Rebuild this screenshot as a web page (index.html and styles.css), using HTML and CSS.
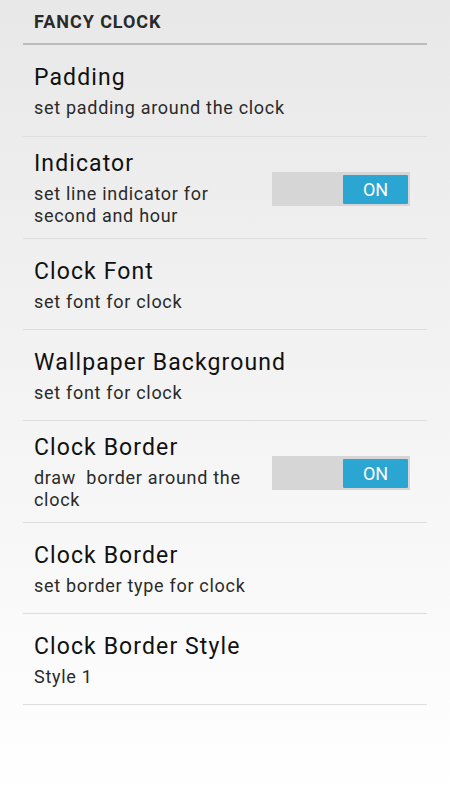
FILE: index.html
```html
<!DOCTYPE html>
<html lang="en">

<head>
    <meta charset="UTF-8">
    <meta name="viewport" content="width=device-width, initial-scale=1.0">
    <title>Fancy Clock</title>
    <link rel="stylesheet" href="styles.css">
</head>

<body>
    <div class="settings">
        <h2 class="category">FANCY CLOCK</h2>

        <div class="pref">
            <div class="pref-text">
                <div class="pref-title">Padding</div>
                <div class="pref-summary">set padding around the clock</div>
            </div>
        </div>

        <div class="pref">
            <div class="pref-text">
                <div class="pref-title">Indicator</div>
                <div class="pref-summary">set line indicator for second and hour</div>
            </div>
            <div class="toggle"><span class="toggle-on">ON</span></div>
        </div>

        <div class="pref">
            <div class="pref-text">
                <div class="pref-title">Clock Font</div>
                <div class="pref-summary">set font for clock</div>
            </div>
        </div>

        <div class="pref">
            <div class="pref-text">
                <div class="pref-title">Wallpaper Background</div>
                <div class="pref-summary">set font for clock</div>
            </div>
        </div>

        <div class="pref">
            <div class="pref-text">
                <div class="pref-title">Clock Border</div>
                <div class="pref-summary">draw&nbsp; border around the clock</div>
            </div>
            <div class="toggle"><span class="toggle-on">ON</span></div>
        </div>

        <div class="pref">
            <div class="pref-text">
                <div class="pref-title">Clock Border</div>
                <div class="pref-summary">set border type for clock</div>
            </div>
        </div>

        <div class="pref">
            <div class="pref-text">
                <div class="pref-title">Clock Border Style</div>
                <div class="pref-summary">Style 1</div>
            </div>
        </div>
    </div>
</body>

</html>
```

FILE: styles.css
```css
/* General */
* {
    box-sizing: border-box;
    margin: 0;
    padding: 0;
}

html, body {
    height: 100%;
}

body {
    font-family: Roboto, "Noto Sans", sans-serif;
    background: linear-gradient(#e8e8e8, #ffffff);
    color: #111;
}

.settings {
    margin: 0 23px;
}

/* Category header */
.category {
    font-size: 18px;
    font-weight: bold;
    letter-spacing: 0.95px;
    color: #2a2a2a;
    height: 45px;
    padding: 11px 0 0 11px;
    border-bottom: 2px solid #bcbcbc;
}

/* Preference rows */
.pref {
    display: flex;
    align-items: center;
    min-height: 91px;
    padding: 13px 17px 11px 11px;
    border-bottom: 1px solid #dedede;
}

.pref:first-of-type {
    min-height: 92px;
}

.pref-text {
    flex: 1;
}

.pref-title {
    font-size: 23px;
    line-height: 28px;
    letter-spacing: 1.1px;
    color: #111;
}

.pref-summary {
    font-size: 18px;
    line-height: 22px;
    letter-spacing: 0.7px;
    margin-top: 5px;
    color: #2a2a2a;
    max-width: 222px;
}

.pref-text:only-child .pref-summary {
    max-width: none;
}

/* Toggle switch */
.toggle {
    width: 138px;
    height: 34px;
    background-color: #d6d6d6;
    padding: 3px 2px 2px 71px;
    flex-shrink: 0;
}

.toggle-on {
    display: flex;
    align-items: center;
    justify-content: center;
    height: 100%;
    background-color: #2ba5d1;
    color: white;
    font-size: 18px;
    border-radius: 1px;
}
```
